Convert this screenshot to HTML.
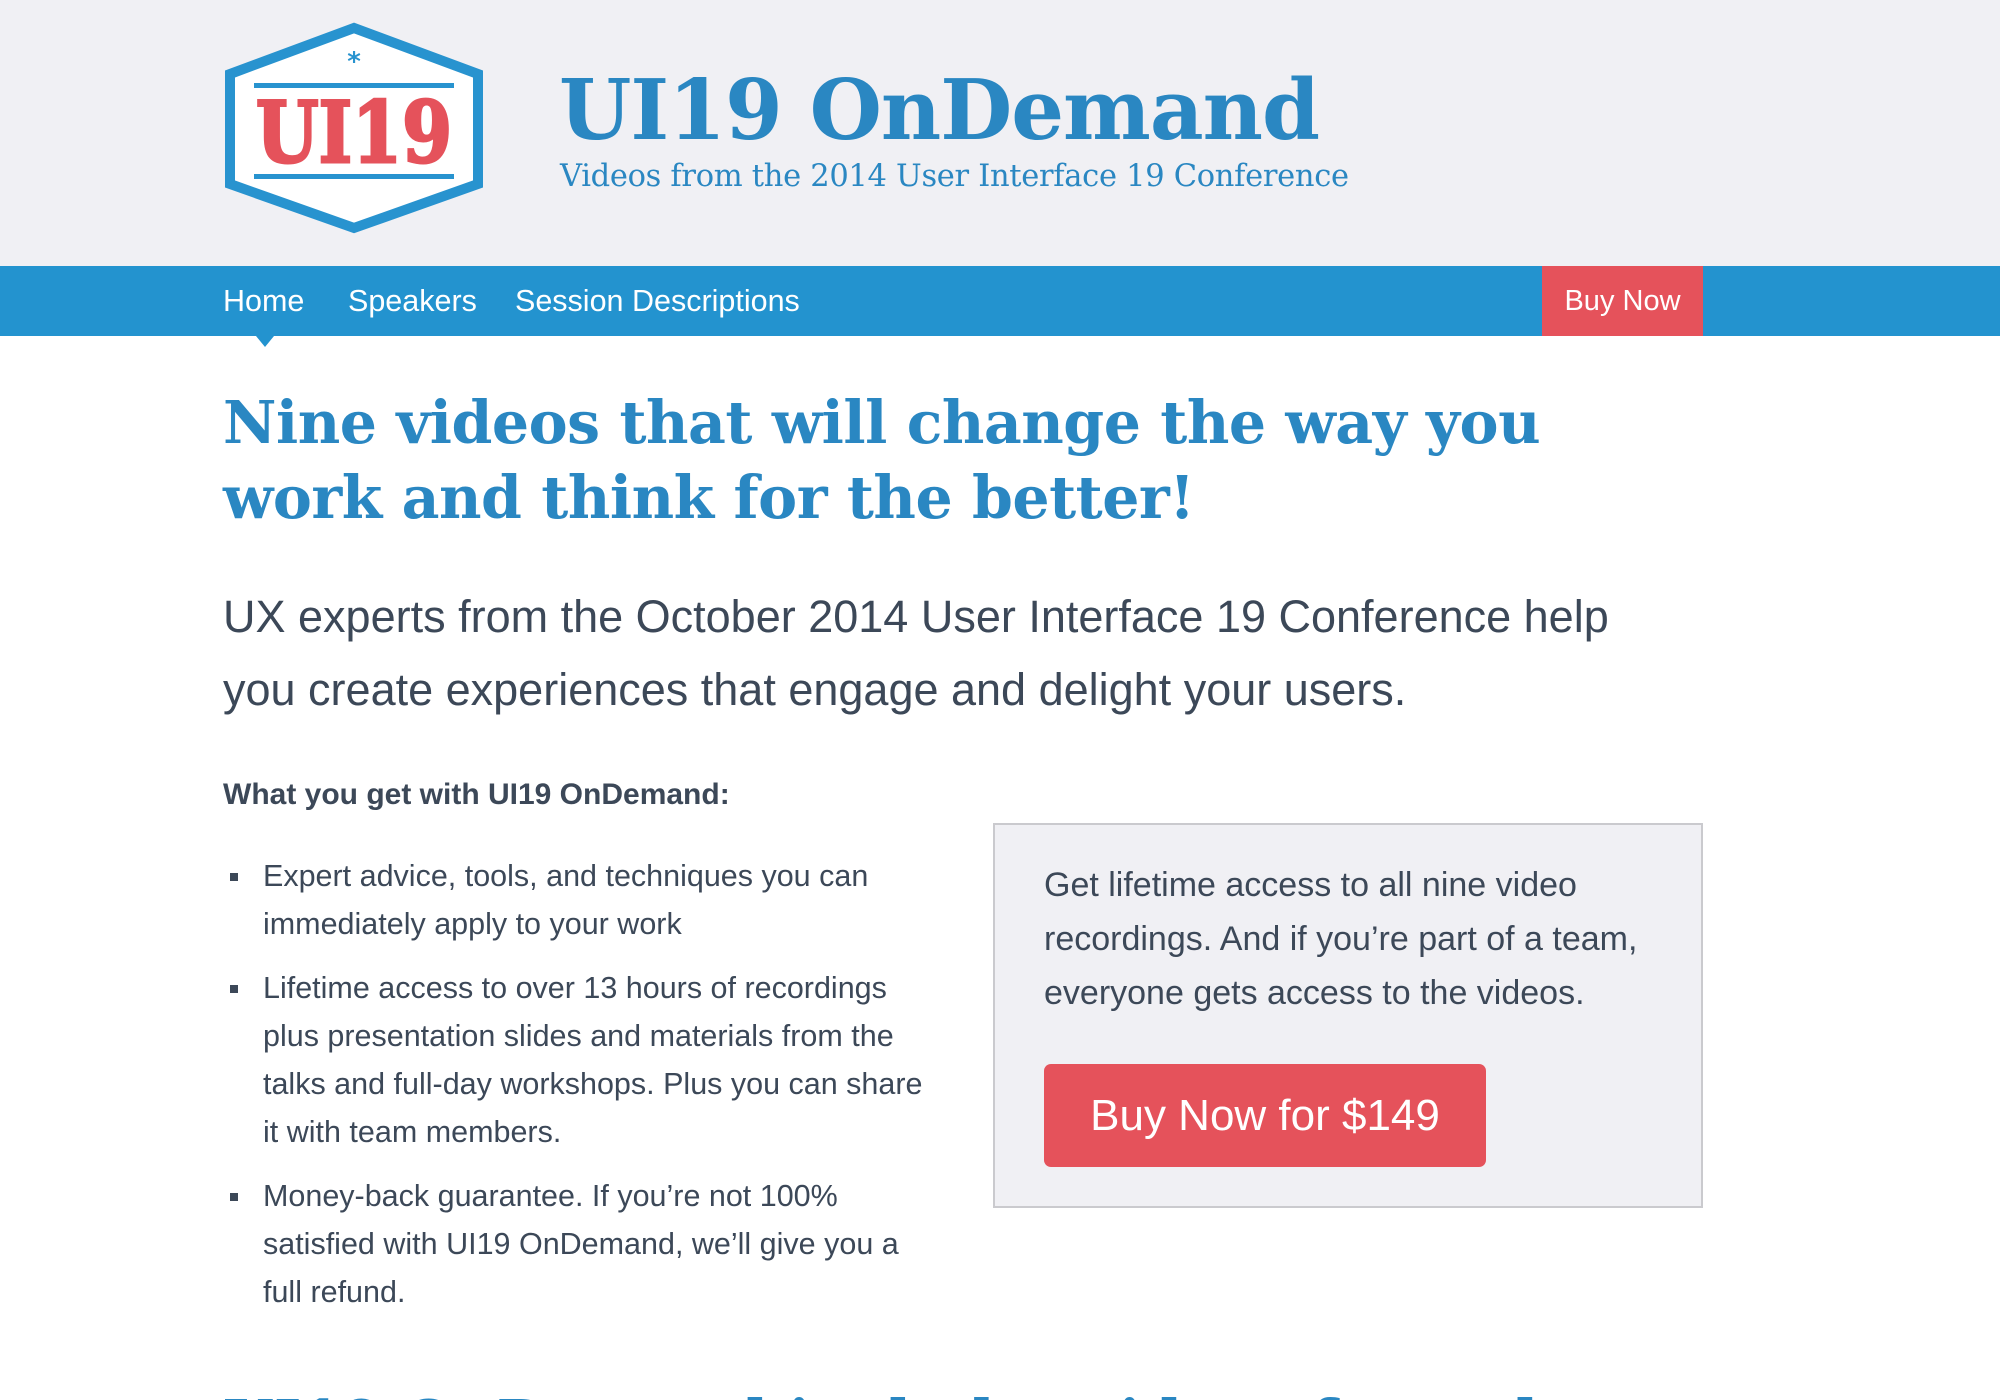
<!DOCTYPE html>
<html><head><meta charset="utf-8"><style>
*{margin:0;padding:0;box-sizing:border-box}
html,body{width:2000px;height:1400px;overflow:hidden}
body{background:#fff;font-family:"Liberation Sans",sans-serif;color:#3c4858;position:relative}
.hdr{position:absolute;left:0;top:0;width:2000px;height:267px;background:#f0f0f4}
.logo{position:absolute;left:223px;top:22px}
.title{position:absolute;left:559px;top:55px;font-family:"DejaVu Serif",serif;font-weight:bold;font-size:83px;color:#2a87c2;letter-spacing:-1px;line-height:110px;white-space:nowrap}
.sub{position:absolute;left:560px;top:159px;font-family:"DejaVu Serif",serif;font-size:30.5px;color:#2a87c2;white-space:nowrap;letter-spacing:-0.3px}
.nav{position:absolute;left:0;top:266px;width:2000px;height:70px;background:#2393cf}
.nav a{position:absolute;top:0;line-height:70px;font-size:30.5px;color:#fff;text-decoration:none;white-space:nowrap}
.buy{position:absolute;left:1542px;top:266px;width:161px;height:70px;background:#e5525b;color:#fff;font-size:29px;line-height:70px;text-align:center}
.tri{position:absolute;left:256px;top:336px;width:0;height:0;border-left:9px solid transparent;border-right:9px solid transparent;border-top:11px solid #2393cf}
h1{position:absolute;left:223px;top:385px;font-family:"DejaVu Serif",serif;font-weight:bold;font-size:58.5px;line-height:75px;color:#2a87c2;letter-spacing:-0.5px;width:1400px}
.lead{position:absolute;left:223px;top:580px;font-size:45px;line-height:73px;color:#3c4858;width:1450px}
.wy{position:absolute;left:223px;top:778px;font-size:30px;font-weight:bold;color:#3c4858}
ul{position:absolute;left:263px;top:852px;width:672px;list-style:none;font-size:30.5px;line-height:48px}
li{position:relative;margin-bottom:16px}
li:before{content:"";position:absolute;left:-33px;top:21px;width:8px;height:8px;background:#3c4858}
.box{position:absolute;left:993px;top:823px;width:710px;height:385px;background:#f0f0f4;border:2px solid #cacace}
.box p{position:absolute;left:49px;top:33px;width:640px;font-size:34px;line-height:54px;color:#3c4858}
.btn{position:absolute;left:49px;top:239px;width:442px;height:103px;background:#e5525b;border-radius:7px;color:#fff;font-size:44px;line-height:103px;text-align:center}
.h2w{position:absolute;left:0;top:1380px;width:2000px;height:20px;overflow:hidden}
.h2{position:absolute;left:223px;top:4px;font-family:"DejaVu Serif",serif;font-weight:bold;font-size:58.5px;line-height:75px;color:#2a87c2;white-space:nowrap}
</style></head><body>
<div class="hdr"></div>
<svg class="logo" width="262" height="212" viewBox="0 0 262 212">
<polygon points="131,6 255,52 255,162 131,206 7,162 7,52" fill="#fff" stroke="#2893cf" stroke-width="10"/>
<text x="131" y="48" text-anchor="middle" font-family="DejaVu Sans" font-weight="bold" font-size="26" fill="#2893cf">*</text>
<rect x="31" y="61" width="200" height="5" fill="#2893cf"/>
<rect x="31" y="152" width="200" height="5" fill="#2893cf"/>
<text x="131" y="140" text-anchor="middle" font-family="DejaVu Serif" font-weight="bold" font-size="84" fill="#e5525b" stroke="#e5525b" stroke-width="3" textLength="196" lengthAdjust="spacingAndGlyphs">UI19</text>
</svg>
<div class="title">UI19 OnDemand</div>
<div class="sub">Videos from the 2014 User Interface 19 Conference</div>
<div class="nav">
<a style="left:223px">Home</a><a style="left:348px">Speakers</a><a style="left:515px">Session Descriptions</a>
</div>
<div class="tri"></div>
<div class="buy">Buy Now</div>
<h1>Nine videos that will change the way you work and think for the better!</h1>
<div class="lead">UX experts from the October 2014 User Interface 19 Conference help you create experiences that engage and delight your users.</div>
<div class="wy">What you get with UI19 OnDemand:</div>
<ul>
<li>Expert advice, tools, and techniques you can immediately apply to your work</li>
<li>Lifetime access to over 13 hours of recordings plus presentation slides and materials from the talks and full-day workshops. Plus you can share it with team members.</li>
<li>Money-back guarantee. If you’re not 100% satisfied with UI19 OnDemand, we’ll give you a full refund.</li>
</ul>
<div class="box">
<p>Get lifetime access to all nine video recordings. And if you’re part of a team, everyone gets access to the videos.</p>
<div class="btn">Buy Now for $149</div>
</div>
<div class="h2w"><div class="h2">UI19 OnDemand includes videos from these experts</div></div>
</body></html>
